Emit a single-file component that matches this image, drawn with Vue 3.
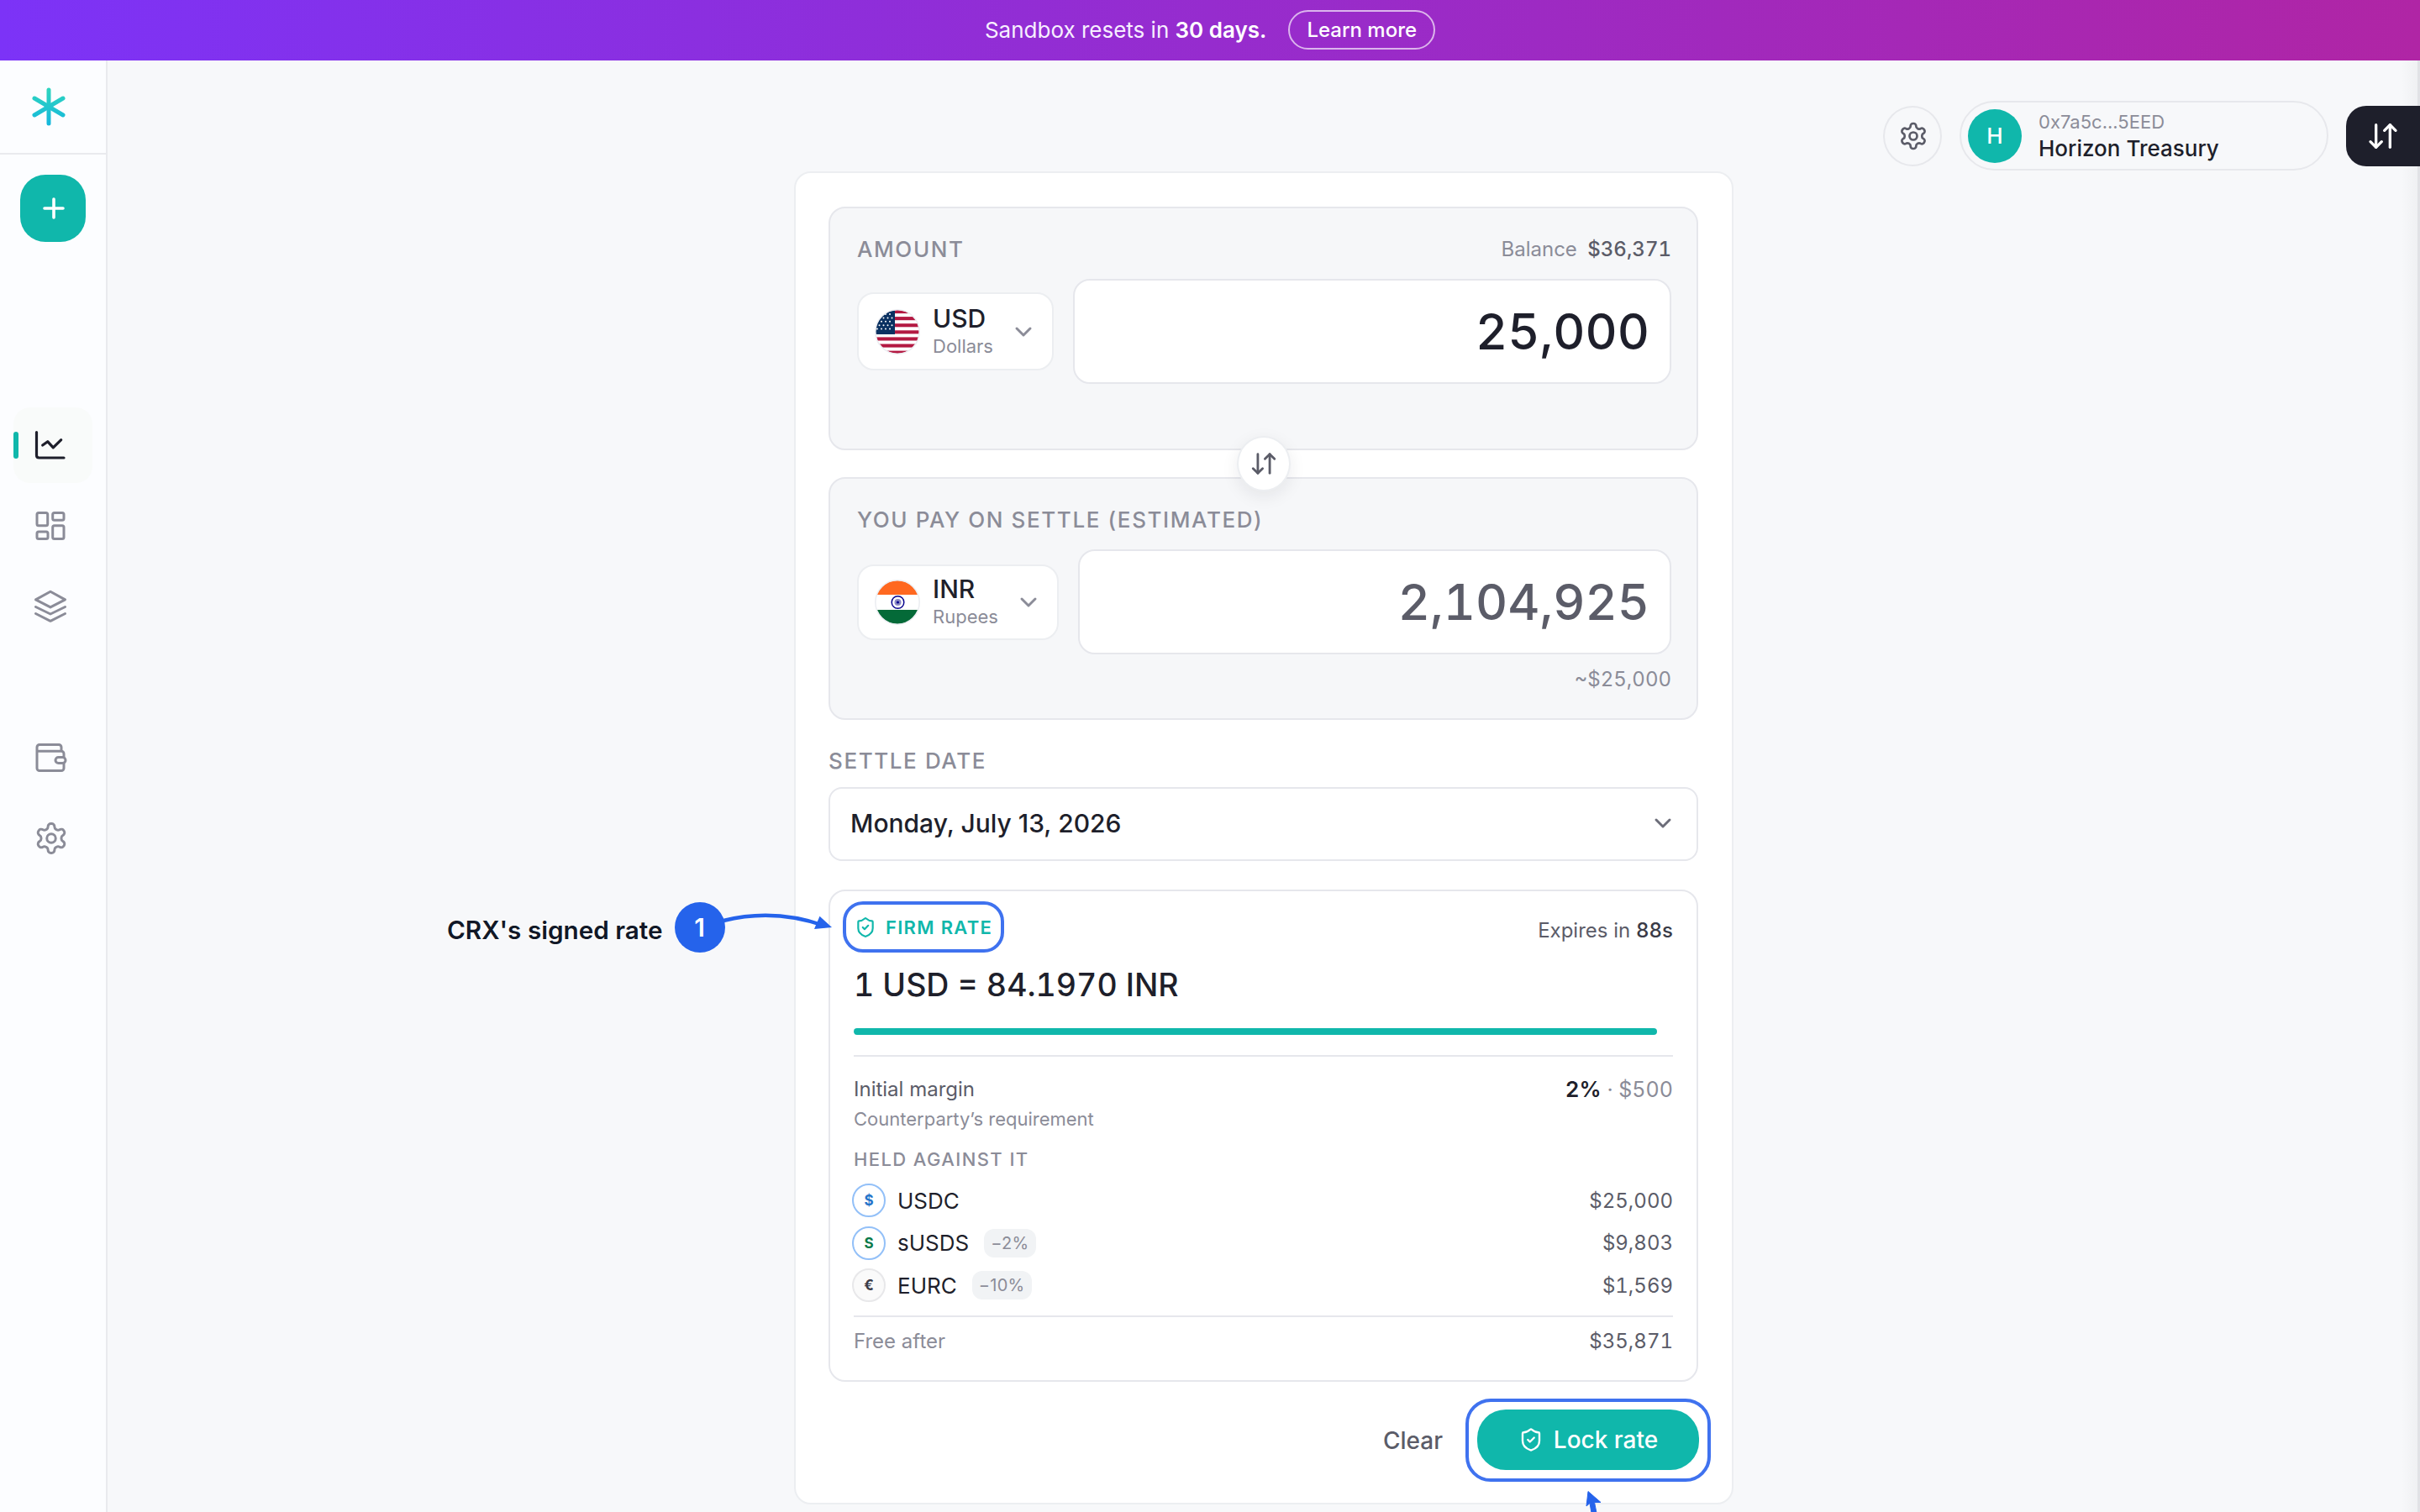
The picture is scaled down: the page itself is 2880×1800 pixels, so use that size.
<script setup>
const navTop = [
  { id: 'chart', active: true },
  { id: 'grid' },
  { id: 'layers' },
]
const navBottom = [{ id: 'wallet' }, { id: 'gear' }]
const gear = 'M12.22 2h-.44a2 2 0 0 0-2 2v.18a2 2 0 0 1-1 1.73l-.43.25a2 2 0 0 1-2 0l-.15-.08a2 2 0 0 0-2.73.73l-.22.38a2 2 0 0 0 .73 2.73l.15.1a2 2 0 0 1 1 1.72v.51a2 2 0 0 1-1 1.74l-.15.09a2 2 0 0 0-.73 2.73l.22.38a2 2 0 0 0 2.73.73l.15-.08a2 2 0 0 1 2 0l.43.25a2 2 0 0 1 1 1.73V20a2 2 0 0 0 2 2h.44a2 2 0 0 0 2-2v-.18a2 2 0 0 1 1-1.73l.43-.25a2 2 0 0 1 2 0l.15.08a2 2 0 0 0 2.73-.73l.22-.39a2 2 0 0 0-.73-2.73l-.15-.08a2 2 0 0 1-1-1.74v-.5a2 2 0 0 1 1-1.74l.15-.09a2 2 0 0 0 .73-2.73l-.22-.38a2 2 0 0 0-2.73-.73l-.15.08a2 2 0 0 1-2 0l-.43-.25a2 2 0 0 1-1-1.73V4a2 2 0 0 0-2-2z'
const shield = 'M20 13c0 5-3.5 7.5-7.66 8.95a1 1 0 0 1-.67-.01C7.5 20.5 4 18 4 13V6a1 1 0 0 1 1-1c2 0 4.5-1.2 6.24-2.72a1.17 1.17 0 0 1 1.52 0C14.51 3.81 17 5 19 5a1 1 0 0 1 1 1z'
const coins = [
  { sym: '$', name: 'USDC', value: '$25,000', cls: 'c-usdc' },
  { sym: 'S', name: 'sUSDS', value: '$9,803', hair: '−2%', cls: 'c-susds' },
  { sym: '€', name: 'EURC', value: '$1,569', hair: '−10%', cls: 'c-eurc' },
]
const stripes = [0, 1, 2, 3, 4, 5, 6]
const stars = []
for (let r = 0; r < 5; r++) for (let c = 0; c < 4; c++) stars.push({ x: 3 + c * 5 + (r % 2) * 2.5, y: 6 + r * 4.4 })
</script>

<template>
  <div class="app">
    <div class="banner">
      <span>Sandbox resets in <b>30 days.</b></span>
      <span class="learn">Learn more</span>
    </div>
    <div class="shell">
      <aside class="side">
        <div class="logo">
          <svg width="44" height="48" viewBox="0 0 44 48" fill="none">
            <defs>
              <linearGradient id="lg" gradientUnits="userSpaceOnUse" x1="22" y1="4" x2="22" y2="44">
                <stop offset="0" stop-color="#2dd4bf" />
                <stop offset="1" stop-color="#16b8dc" />
              </linearGradient>
            </defs>
            <g stroke="url(#lg)" stroke-width="5" stroke-linecap="round">
              <path d="M22 4V44" />
              <path d="M5 14L39 34" />
              <path d="M39 14L5 34" />
            </g>
          </svg>
        </div>
        <button class="plus">
          <svg width="28" height="28" viewBox="0 0 28 28" fill="none" stroke="#fff" stroke-width="3.6" stroke-linecap="round"><path d="M14 3V25M3 14H25" /></svg>
        </button>
        <nav class="nav nav-top">
          <div v-for="n in navTop" :key="n.id" class="nav-item" :class="{ active: n.active }">
            <svg v-if="n.id === 'chart'" width="40" height="40" viewBox="0 0 40 40" fill="none" stroke="#1e1f2b" stroke-width="3.2" stroke-linecap="round" stroke-linejoin="round">
              <path d="M3.5 4.5V32Q3.5 35 6.5 35H36" /><path d="M10.7 20L16.7 15.7L23.3 22.9L32.7 13.6" />
            </svg>
            <svg v-else-if="n.id === 'grid'" width="40" height="40" viewBox="0 0 40 40" fill="none" stroke="#8b8c98" stroke-width="3">
              <rect x="4" y="4.4" width="12.7" height="15.3" rx="2" /><rect x="22.7" y="4.4" width="13.3" height="8.9" rx="2" />
              <rect x="4" y="26.9" width="13" height="8.5" rx="2" /><rect x="22.7" y="19.7" width="13.3" height="15.7" rx="2" />
            </svg>
            <svg v-else width="40" height="40" viewBox="0 0 40 40" fill="none" stroke="#8b8c98" stroke-width="3" stroke-linejoin="round" stroke-linecap="round">
              <path d="M20 2.3L37.5 11.9L20 20.9L2.5 11.9Z" /><path d="M2.5 20.5L20 29L37.5 20.5" /><path d="M2.5 28.5L20 37.3L37.5 28.5" />
            </svg>
          </div>
        </nav>
        <nav class="nav nav-bottom">
          <div v-for="n in navBottom" :key="n.id" class="nav-item">
            <svg v-if="n.id === 'wallet'" width="40" height="40" viewBox="0 0 40 40" fill="none" stroke="#8b8c98" stroke-width="3" stroke-linejoin="round">
              <path d="M4 12.3H33a3 3 0 0 1 3 3V32.500a3 3 0 0 1-3 3H7a3 3 0 0 1-3-3V7.400a3 3 0 0 1 3-3H30a3 3 0 0 1 3 3V12.300" />
              <rect x="26" y="19.400" width="12" height="7.200" rx="3.600" fill="#fcfdff" />
            </svg>
            <svg v-else width="42" height="42" viewBox="0 0 24 24" fill="none" stroke="#8b8c98" stroke-width="1.700" stroke-linecap="round" stroke-linejoin="round">
              <path :d="gear" /><circle cx="12" cy="12" r="3" />
            </svg>
          </div>
        </nav>
      </aside>

      <main class="main">
        <div class="top">
          <div class="round">
            <svg width="36" height="36" viewBox="0 0 24 24" fill="none" stroke="#5b5c68" stroke-width="1.800" stroke-linecap="round" stroke-linejoin="round"><path :d="gear" /><circle cx="12" cy="12" r="3" /></svg>
          </div>
          <div class="wallet">
            <div class="avatar">H</div>
            <div class="wallet-text">
              <div class="addr">0x7a5c...5EED</div>
              <div class="wname">Horizon Treasury</div>
            </div>
          </div>
          <div class="dark">
            <svg width="40" height="40" viewBox="0 0 24 24" fill="none" stroke="#fff" stroke-width="2" stroke-linecap="round" stroke-linejoin="round"><path d="m3 16 4 4 4-4" /><path d="M7 20V4" /><path d="m21 8-4-4-4 4" /><path d="M17 4v16" /></svg>
          </div>
        </div>

        <section class="card">
          <div class="panel p1">
            <div class="head"><span class="label">AMOUNT</span><span class="bal">Balance <em>$36,371</em></span></div>
            <div class="row">
              <div class="sel">
                <svg class="flag" width="54" height="54" viewBox="0 0 54 54">
                  <defs><clipPath id="fc"><circle cx="27" cy="27" r="26" /></clipPath></defs>
                  <g clip-path="url(#fc)">
                    <rect width="54" height="54" fill="#fff" />
                    <rect v-for="s in stripes" :key="s" x="0" :y="1 + s * 8.1" width="54" height="4.100" fill="#b31942" />
                    <rect x="0" y="0" width="24" height="30" fill="#0a3161" />
                    <circle v-for="(st, i) in stars" :key="i" :cx="st.x" :cy="st.y" r="1" fill="#fff" />
                  </g>
                  <circle cx="27" cy="27" r="26.200" fill="none" stroke="#eceef2" stroke-width="1.600" />
                </svg>
                <div class="cur"><div class="code">USD</div><div class="cname">Dollars</div></div>
                <svg class="chev" width="28" height="28" viewBox="0 0 28 28" fill="none" stroke="#8b8c98" stroke-width="3" stroke-linecap="round" stroke-linejoin="round"><path d="M6 10L14 18L22 10" /></svg>
              </div>
              <div class="input"><span class="val">25,000</span></div>
            </div>
          </div>

          <button class="swap">
            <svg width="34" height="34" viewBox="0 0 24 24" fill="none" stroke="#5b5c68" stroke-width="2" stroke-linecap="round" stroke-linejoin="round"><path d="m3 16 4 4 4-4" /><path d="M7 20V4" /><path d="m21 8-4-4-4 4" /><path d="M17 4v16" /></svg>
          </button>

          <div class="panel p2">
            <div class="head"><span class="label">YOU PAY ON SETTLE (ESTIMATED)</span></div>
            <div class="row">
              <div class="sel inr">
                <svg class="flag" width="54" height="54" viewBox="0 0 54 54">
                  <defs><clipPath id="fi"><circle cx="27" cy="27" r="26" /></clipPath></defs>
                  <g clip-path="url(#fi)">
                    <rect width="54" height="54" fill="#fff" />
                    <rect width="54" height="18" fill="#ff6820" />
                    <rect y="36" width="54" height="18" fill="#046a38" />
                    <circle cx="27.500" cy="27" r="7.300" fill="none" stroke="#06038d" stroke-width="1.500" />
                    <circle cx="27.500" cy="27" r="4" fill="#8c8ac4" />
                    <circle cx="27.500" cy="27" r="1.600" fill="#06038d" />
                  </g>
                  <circle cx="27" cy="27" r="26.200" fill="none" stroke="#eceef2" stroke-width="1.600" />
                </svg>
                <div class="cur"><div class="code">INR</div><div class="cname">Rupees</div></div>
                <svg class="chev" width="28" height="28" viewBox="0 0 28 28" fill="none" stroke="#8b8c98" stroke-width="3" stroke-linecap="round" stroke-linejoin="round"><path d="M6 10L14 18L22 10" /></svg>
              </div>
              <div class="input"><span class="val muted">2,104,925</span></div>
            </div>
            <div class="approx">~$25,000</div>
          </div>

          <div class="settle-label label">SETTLE DATE</div>
          <div class="date">
            <span>Monday, July 13, 2026</span>
            <svg width="28" height="28" viewBox="0 0 28 28" fill="none" stroke="#6c6d79" stroke-width="3" stroke-linecap="round" stroke-linejoin="round"><path d="M6 10L14 18L22 10" /></svg>
          </div>

          <div class="rate">
            <div class="rate-head">
              <div class="firm">
                <svg width="26" height="26" viewBox="0 0 24 24" fill="none" stroke="#10b7ab" stroke-width="2" stroke-linecap="round" stroke-linejoin="round"><path :d="shield" /><path d="m9 12 2 2 4-4" /></svg>
                <span>FIRM RATE</span>
              </div>
              <div class="exp">Expires in <em>88s</em></div>
            </div>
            <div class="rate-val">1 USD = 84.1970 INR</div>
            <div class="bar"></div>
            <div class="hr first"></div>
            <div class="line m1"><span>Initial margin</span><span class="r"><b>2%</b> · $500</span></div>
            <div class="req">Counterparty’s requirement</div>
            <div class="held">HELD AGAINST IT</div>
            <div class="coins">
              <div v-for="c in coins" :key="c.name" class="coin">
                <span class="dot" :class="c.cls">{{ c.sym }}</span>
                <span class="cn">{{ c.name }}</span>
                <span v-if="c.hair" class="hair">{{ c.hair }}</span>
                <span class="cv">{{ c.value }}</span>
              </div>
            </div>
            <div class="hr second"></div>
            <div class="line free"><span>Free after</span><span class="fv">$35,871</span></div>
          </div>

          <div class="foot">
            <span class="clear">Clear</span>
            <div class="ring">
              <button class="lock">
                <svg width="30" height="30" viewBox="0 0 24 24" fill="none" stroke="#fff" stroke-width="1.900" stroke-linecap="round" stroke-linejoin="round"><path :d="shield" /><path d="m9 12 2 2 4-4" /></svg>
                <span>Lock rate</span>
              </button>
            </div>
            <svg class="pointer" width="24" height="26" viewBox="0 0 24 26"><path d="M3 0.500L18 13.500L10.500 13.500L13 26H7L5 14.500L1 18Z" fill="#2563eb" stroke="#2563eb" stroke-linejoin="round" /></svg>
          </div>
        </section>
      </main>
    </div>

    <div class="note">
      <span class="note-text">CRX's signed rate</span>
      <span class="note-num">1</span>
      <svg class="note-arrow" width="140" height="40" viewBox="0 0 140 40" fill="none">
        <path d="M2 18Q62 3 122 24" stroke="#2563eb" stroke-width="4.500" stroke-linecap="round" />
        <path d="M116.500 12.700L131 26L110 28Z" fill="#2563eb" />
      </svg>
    </div>
    <div class="edge"></div>
  </div>
</template>

<style>
html, body { margin: 0; background: #f7f8fa; }
</style>

<style scoped>
.app { position: relative; width: 2880px; height: 1800px; overflow: hidden; font-family: Inter, "Noto Sans", sans-serif; color: #1e1f2b; background: #f7f8fa; display: flex; flex-direction: column; }
* { box-sizing: border-box; }
em { font-style: normal; }
button { font-family: inherit; padding: 0; border: 0; }

.banner { height: 72px; flex: none; background: linear-gradient(90deg, #7c33f7 0%, #b025a5 100%); display: flex; align-items: center; justify-content: center; gap: 26px; color: #fff; font-size: 26px; padding-bottom: 2px; }
.banner span:first-child { color: #f7efff; }
.banner b { font-weight: 600; color: #fff; }
.learn { border: 2px solid rgba(255,255,255,.65); border-radius: 24px; height: 47px; padding: 0 20px; display: flex; align-items: center; font-size: 24px; font-weight: 500; }

.shell { flex: 1; display: flex; min-height: 0; }
.side { width: 128px; flex: none; background: #fcfdff; border-right: 2px solid #e9eaee; display: flex; flex-direction: column; }
.logo { height: 112px; border-bottom: 2px solid #e9eaee; display: flex; align-items: center; justify-content: center; padding-right: 10px; flex: none; }
.plus { width: 78px; height: 80px; margin: 24px 0 0 24px; border-radius: 30px; background: #10b7ab; display: flex; align-items: center; justify-content: center; padding-left: 2px; }
.nav { display: flex; flex-direction: column; gap: 6px; }
.nav-top { margin-top: 197px; }
.nav-bottom { margin-top: 90px; }
.nav-item { width: 94px; height: 90px; margin-left: 16px; border-radius: 20px; position: relative; display: flex; align-items: center; padding-left: 24px; }
.nav-item.active { background: #f9fbfa; }
.nav-item.active::before { content: ""; position: absolute; left: 0; top: 29px; width: 6px; height: 32px; border-radius: 3px; background: #10b7ab; }

.main { flex: 1; min-width: 0; display: flex; flex-direction: column; align-items: center; }
.top { width: 100%; height: 84px; margin-top: 48px; flex: none; display: flex; justify-content: flex-end; align-items: flex-start; }
.round { width: 70px; height: 72px; margin-top: 6px; border: 2px solid #e7e8ec; border-radius: 50%; display: flex; align-items: center; justify-content: center; padding-left: 2px; }
.wallet { width: 439px; height: 83px; margin-left: 21px; border: 2px solid #e7e8ec; border-radius: 42px; display: flex; align-items: center; padding-left: 8px; }
.avatar { width: 64px; height: 64px; border-radius: 50%; background: #10b7ab; color: #fff; display: flex; align-items: center; justify-content: center; font-size: 26px; font-weight: 500; }
.wallet-text { margin-left: 20px; padding-top: 1px; }
.addr { font-size: 22px; line-height: 29px; color: #8b8c98; }
.wname { font-size: 26px; line-height: 33px; font-weight: 500; }
.dark { position: relative; z-index: 3; width: 88px; height: 72px; margin: 6px 0 0 21px; background: #1e1f2b; border-radius: 24px 0 0 24px; display: flex; align-items: center; justify-content: center; padding-left: 14px; padding-right: 14px; }

.card { position: relative; width: 1118px; height: 1587px; flex: none; background: #fff; border: 2px solid #eceef1; border-radius: 20px; padding: 40px 40px 0 39px; }
.panel { background: #f6f7f9; border: 2px solid #e6e7ec; border-radius: 20px; padding: 30px 30px 0 32px; }
.p1 { height: 290px; }
.p2 { height: 289px; margin-top: 32px; }
.head { display: flex; justify-content: space-between; align-items: center; height: 36px; }
.label { font-size: 26px; letter-spacing: 1.600px; color: #8b8c98; font-weight: 500; }
.bal { font-size: 24px; color: #8b8c98; font-variant-numeric: tabular-nums; }
.bal em { color: #5b5c68; margin-left: 6px; font-weight: 500; }
.row { display: flex; align-items: center; margin-top: 18px; height: 125px; gap: 23px; }
.sel { width: 234px; height: 93px; flex: none; background: #fff; border: 2px solid #eceef1; border-radius: 20px; display: flex; align-items: center; padding-left: 19px; position: relative; }
.sel.inr { width: 240px; height: 90px; }
.cur { margin-left: 15px; padding-bottom: 2px; }
.code { font-size: 30px; line-height: 36px; font-weight: 500; }
.cname { font-size: 22px; line-height: 30px; color: #8b8c98; }
.chev { position: absolute; right: 20px; top: 50%; margin-top: -14px; }
.input { flex: 1; height: 125px; background: #fff; border: 2px solid #e6e7ec; border-radius: 20px; display: flex; align-items: center; justify-content: flex-end; padding-right: 24px; }
.val { font-size: 59px; font-weight: 500; font-variant-numeric: tabular-nums; }
.val.muted { color: #5b5c68; }
.approx { text-align: right; font-size: 24px; line-height: 32px; margin-top: 14px; color: #8b8c98; font-variant-numeric: tabular-nums; }

.swap { position: absolute; left: 525px; top: 313px; width: 64px; height: 66px; border-radius: 50%; background: #fff; border: 2px solid #eceef1; box-shadow: 0 6px 20px rgba(30,31,43,.08); display: flex; align-items: center; justify-content: center; z-index: 2; }

.settle-label { display: block; margin-top: 31px; line-height: 36px; height: 36px; }
.date { margin-top: 13px; height: 88px; border: 2px solid #e6e7ec; border-radius: 16px; display: flex; align-items: center; justify-content: space-between; padding: 0 26px 2px 24px; font-size: 30px; font-weight: 500; }

.rate { margin-top: 34px; height: 586px; border: 2px solid #e6e7ec; border-radius: 20px; padding: 12px 28px 0; }
.rate-head { display: flex; justify-content: space-between; align-items: flex-start; height: 61px; }
.firm { height: 61px; width: 192px; margin-left: -13px; border: 4px solid #3f72ef; border-radius: 24px; display: flex; align-items: center; padding-left: 10px; gap: 11px; color: #10b7ab; font-size: 22px; font-weight: 600; letter-spacing: 1.300px; }
.exp { font-size: 24px; line-height: 36px; margin-top: 17px; color: #5b5c68; margin-right: 0; }
.exp em { font-weight: 500; color: #3a3b47; font-variant-numeric: tabular-nums; }
.rate-val { font-size: 37.500px; font-weight: 500; line-height: 50px; margin-top: 14px; font-variant-numeric: tabular-nums; }
.bar { width: 956px; height: 8px; border-radius: 4px; background: #10b7ab; margin-top: 26px; }
.hr { height: 2px; background: #e6e7ec; }
.hr.first { margin-top: 24px; }
.line { display: flex; justify-content: space-between; font-size: 24px; line-height: 36px; color: #5b5c68; }
.m1 { margin-top: 21px; }
.r { color: #8b8c98; font-size: 25px; font-variant-numeric: tabular-nums; }
.r b { font-weight: 600; font-size: 26px; color: #1e1f2b; }
.req { font-size: 22px; line-height: 32px; margin-top: 1px; color: #8b8c98; }
.held { font-size: 22px; line-height: 32px; margin-top: 16px; color: #8b8c98; letter-spacing: 1.400px; font-weight: 500; }
.coins { margin-top: 8px; }
.coin { height: 50.500px; display: flex; align-items: center; }
.dot { width: 40px; height: 40px; margin-left: -2px; border-radius: 50%; border: 2px solid #93c0f8; display: flex; align-items: center; justify-content: center; font-size: 17px; font-weight: 700; }
.c-usdc { color: #2775ca; }
.c-susds { color: #0b7a4b; }
.c-eurc { color: #3b3c48; border-color: #e8e8ea; background: #fafafa; }
.cn { font-size: 26px; margin-left: 14px; }
.hair { margin-left: 18px; height: 34px; padding: 0 8px; border-radius: 12px; background: #f1f3f5; color: #8b8c98; font-size: 20px; display: flex; align-items: center; letter-spacing: .3px; }
.cv { margin-left: auto; font-size: 24px; color: #5b5c68; font-variant-numeric: tabular-nums; }
.hr.second { margin-top: 10.500px; }
.free { margin-top: 11px; color: #8b8c98; }
.fv { color: #5b5c68; font-size: 24px; font-variant-numeric: tabular-nums; }

.foot { position: relative; display: flex; justify-content: flex-end; align-items: center; margin: 20px -15px 0 0; }
.clear { font-size: 28px; color: #5b5c68; font-weight: 500; margin-right: 27px; }
.ring { border: 4px solid #3f72ef; border-radius: 30px; padding: 9px 10px; width: 292px; height: 99px; }
.lock { width: 264px; height: 72px; border-radius: 34px; background: #10b7ab; color: #fff; display: flex; align-items: center; justify-content: center; gap: 12px; font-size: 28px; font-weight: 500; }
.pointer { position: absolute; right: 125px; top: 110px; }

.note { position: absolute; left: 532px; top: 1074px; display: flex; align-items: center; height: 60px; }
.note-text { font-size: 29.700px; font-weight: 600; color: #111827; padding-top: 6px; text-shadow: 0 0 3px #fff, 0 0 3px #fff; }
.note-num { width: 60px; height: 60px; margin-left: 14px; border-radius: 50%; background: #2563eb; color: #fff; display: flex; align-items: center; justify-content: center; font-size: 30px; font-weight: 600; }
.note-arrow { position: absolute; left: 327px; top: 4px; }
.edge { position: absolute; z-index: 2; right: 0; top: 72px; bottom: 0; width: 22px; background: linear-gradient(90deg, rgba(120,120,130,0) 0, rgba(120,120,130,.06) 19px, #e1e2e6 19px, #e1e2e6 22px); pointer-events: none; }
</style>
